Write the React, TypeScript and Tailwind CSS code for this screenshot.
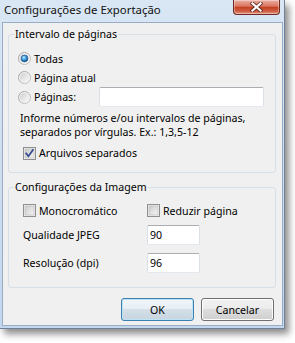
import React, { useId } from "react";

function Radio({ checked }: { checked?: boolean }) {
  const id = useId().replace(/[^a-zA-Z0-9]/g, "");
  return (
    <svg width="13" height="13" viewBox="0 0 13 13" className="shrink-0">
      <defs>
        <linearGradient id={`ro${id}`} x1="0" y1="0" x2="1" y2="1">
          <stop offset="0" stopColor="#9c9c9c" />
          <stop offset="1" stopColor="#c8c8c8" />
        </linearGradient>
        <linearGradient id={`ri${id}`} x1="0" y1="0" x2="1" y2="1">
          <stop offset="0" stopColor="#cfcfcf" />
          <stop offset="1" stopColor="#fafafa" />
        </linearGradient>
        <radialGradient id={`rd${id}`} cx="0.4" cy="0.35" r="0.75">
          <stop offset="0" stopColor="#c2f0ff" />
          <stop offset="0.45" stopColor="#3a9be0" />
          <stop offset="1" stopColor="#0d3f7a" />
        </radialGradient>
      </defs>
      <circle cx="6.5" cy="6.5" r="6" fill="#f3f3f3" stroke={`url(#ro${id})`} />
      <circle cx="6.5" cy="6.5" r="4.6" fill={`url(#ri${id})`} />
      {checked && <circle cx="6.5" cy="6.5" r="3.4" fill={`url(#rd${id})`} stroke="#1a4b80" strokeWidth="0.6" />}
    </svg>
  );
}

function Check({ checked }: { checked?: boolean }) {
  const id = useId().replace(/[^a-zA-Z0-9]/g, "");
  return (
    <svg width="13" height="13" viewBox="0 0 13 13" className="shrink-0">
      <defs>
        <linearGradient id={`cg${id}`} x1="0" y1="0" x2="1" y2="1">
          <stop offset="0" stopColor="#cbcbcb" />
          <stop offset="1" stopColor="#f6f6f6" />
        </linearGradient>
      </defs>
      <rect x="0.5" y="0.5" width="12" height="12" fill="#f4f4f4" stroke="#8e8f8f" />
      <rect x="2" y="2" width="9" height="9" fill={`url(#cg${id})`} stroke="#b4b4b4" strokeWidth="0.6" />
      {checked && (
        <path d="M3.2 6.4 L5.4 9.3 L9.9 2.9" fill="none" stroke="#3a4f92" strokeWidth="1.8" strokeLinecap="square" strokeLinejoin="miter" />
      )}
    </svg>
  );
}

function TextBox({ value, className }: { value?: string; className: string }) {
  return (
    <div
      className={
        "h-[20px] bg-white border border-t-[#abadb3] border-l-[#dbdfe6] border-r-[#dbdfe6] border-b-[#e3e9ef] rounded-[2px] pl-[2px] flex items-center " +
        className
      }
    >
      {value}
    </div>
  );
}

function Group({ title, children }: { title: string; children: React.ReactNode }) {
  return (
    <div className="relative mx-[5px] mr-[6px] border border-[#d5dfe5] rounded-[3px]">
      <span className="absolute left-[5px] top-[-8px] bg-[#f0f0f0] px-[1px] leading-[14px]">{title}</span>
      {children}
    </div>
  );
}

export default function App() {
  return (
    <div className="w-[295px] h-[343px] bg-white font-['Noto_Sans',sans-serif] text-[10.6px] text-black leading-[14px]">
      <div className="w-[285px] h-[329px] flex flex-col pl-[2px] pr-[1px] pb-[2px] border-r border-b border-[#6f8197] bg-gradient-to-b from-[#d9e6f4] to-[#c3d7ed] shadow-[4px_5px_7px_rgba(0,0,0,0.45)]">
        <div className="relative h-[22px] shrink-0 flex items-center pl-[2px] pb-[3px] text-[11.4px] text-[#111]">
          Configurações de Exportação
          <div className="absolute right-[3px] top-0 w-[47px] h-[15px] rounded-b-[4px] border border-t-0 border-[#6e2a20] bg-[linear-gradient(to_bottom,#eab0a3_0%,#d9735f_45%,#c2401f_52%,#cf5d43_80%,#e09a84_100%)] shadow-[inset_0_0_0_1px_rgba(255,255,255,0.35)] flex items-center justify-center">
            <svg width="13" height="10" viewBox="0 0 13 10">
              <path d="M2.5 1.5 L10.5 8.5 M10.5 1.5 L2.5 8.5" stroke="#3d1a14" strokeWidth="4" strokeLinecap="square" opacity="0.7" />
              <path d="M2.5 1.5 L10.5 8.5 M10.5 1.5 L2.5 8.5" stroke="#ffffff" strokeWidth="2.2" strokeLinecap="square" />
            </svg>
          </div>
        </div>
        <div className="flex-1 flex flex-col bg-[#f0f0f0] border border-[#98adc5] pt-[11px] pb-[4px]">
          <Group title="Intervalo de páginas">
            <div className="pt-[14px] pl-[9px] pb-[11px] flex flex-col">
              <div className="h-[19px] flex items-center gap-[3px]">
                <Radio checked />
                <span>Todas</span>
              </div>
              <div className="h-[19px] flex items-center gap-[3px]">
                <Radio />
                <span>Página atual</span>
              </div>
              <div className="h-[20px] flex items-center">
                <div className="w-[81px] flex items-center gap-[3px]">
                  <Radio />
                  <span>Páginas:</span>
                </div>
                <TextBox className="w-[165px]" />
              </div>
              <div className="mt-[4px] ml-[2px]">
                Informe números e/ou intervalos de páginas,
                <br />
                separados por vírgulas. Ex.: 1,3,5-12
              </div>
              <div className="mt-[6px] h-[16px] ml-[5px] flex items-center gap-[3px]">
                <Check checked />
                <span>Arquivos separados</span>
              </div>
            </div>
          </Group>
          <div className="mt-[14px]">
            <Group title="Configurações da Imagem">
              <div className="pt-[14px] pl-[14px] pb-[14px] flex flex-col">
                <div className="h-[17px] flex items-center">
                  <div className="w-[124px] flex items-center gap-[3px]">
                    <Check />
                    <span>Monocromático</span>
                  </div>
                  <div className="flex items-center gap-[3px]">
                    <Check />
                    <span>Reduzir página</span>
                  </div>
                </div>
                <div className="mt-[6px] h-[20px] flex items-center">
                  <span className="w-[124px]">Qualidade JPEG</span>
                  <TextBox value="90" className="w-[53px]" />
                </div>
                <div className="mt-[8px] h-[20px] flex items-center">
                  <span className="w-[124px]">Resolução (dpi)</span>
                  <TextBox value="96" className="w-[53px]" />
                </div>
              </div>
            </Group>
          </div>
          <div className="mt-[10px] flex justify-end gap-[7px] pr-[8px]">
            <button className="w-[73px] h-[23px] rounded-[3px] border border-[#3c7fb1] bg-[linear-gradient(to_bottom,#f1f6fa_0%,#e6eef4_50%,#d4dfe7_50%,#c8d5df_100%)] shadow-[inset_0_0_0_1px_#bfe3f6] flex items-center justify-center">
              OK
            </button>
            <button className="w-[73px] h-[23px] rounded-[3px] border border-[#707070] bg-[linear-gradient(to_bottom,#f2f2f2_0%,#ebebeb_50%,#dddddd_50%,#cfcfcf_100%)] shadow-[inset_0_0_0_1px_#fcfcfc] flex items-center justify-center">
              Cancelar
            </button>
          </div>
        </div>
      </div>
    </div>
  );
}
